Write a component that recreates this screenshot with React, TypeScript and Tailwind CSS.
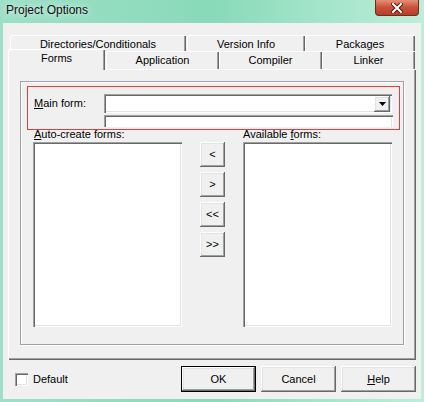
import React from "react";

// classic 3D edges
const raised =
  "bg-[#f0f0f0] shadow-[inset_-1px_-1px_0_#696969,inset_1px_1px_0_#ffffff,inset_-2px_-2px_0_#a0a0a0,inset_2px_2px_0_#e3e3e3]";
const sunken =
  "bg-white shadow-[inset_1px_1px_0_#a0a0a0,inset_2px_2px_0_#696969,inset_-1px_-1px_0_#ffffff,inset_-2px_-2px_0_#e3e3e3]";
const tab =
  "bg-[#f0f0f0] rounded-tl-[2px] text-center leading-[18px] shadow-[inset_1px_1px_0_#ffffff,inset_-1px_0_0_#696969,inset_-2px_0_0_#a0a0a0]";

const Tab = ({ label, w, selected }: { label: string; w: string; selected?: boolean }) => (
  <div
    className={`${tab} ${w} ${selected ? "h-[21px] relative z-10" : "h-[18px] mt-[2px]"}`}
  >
    {label}
  </div>
);

const Btn = ({ children, w, isDefault }: { children: React.ReactNode; w: string; isDefault?: boolean }) => (
  <div
    className={`${w} h-[26px] flex items-center justify-center ${
      isDefault ? "border border-black" : ""
    }`}
  >
    <div className={`${raised} w-full h-full flex items-center justify-center`}>{children}</div>
  </div>
);

const Arrow = ({ label }: { label: string }) => (
  <div className={`${raised} w-[25px] h-[25px] flex items-center justify-center`}>{label}</div>
);

export default function App() {
  return (
    <div
      className="w-[424px] h-[402px] flex flex-col bg-linear-to-r from-[#9fdfc8] via-[#88dab9] to-[#bdeedb] text-[11px] text-black"
      style={{ fontFamily: '"Liberation Sans", Arial, sans-serif' }}
    >
      {/* title bar */}
      <div className="h-[23px] flex items-start justify-between">
        <div className="pl-[6px] pt-[2px] text-[12px] leading-[16px] text-[#111] [text-shadow:0_0_6px_#ffffff]">
          Project Options
        </div>
        <div className="mr-[5px] w-[44px] h-[16px] rounded-b-[4px] border border-t-0 border-[#6e2c20] bg-linear-to-b from-[#e58f75] via-[#c9503a] to-[#b63e28] flex items-center justify-center">
          <svg width="12" height="10" viewBox="0 0 12 10">
            <path d="M2 1 L10 9 M10 1 L2 9" stroke="#4a1a12" strokeWidth="4" strokeLinecap="square" />
            <path d="M2 1 L10 9 M10 1 L2 9" stroke="#ffffff" strokeWidth="2" strokeLinecap="square" />
          </svg>
        </div>
      </div>

      {/* client area */}
      <div className="mx-[3px] mb-[3px] flex-1 bg-[#f0f0f0] flex flex-col">
        {/* back row of tabs */}
        <div className="mt-[10px] ml-[7px] flex">
          <Tab label="Directories/Conditionals" w="w-[176px]" />
          <div className="w-[1px]" />
          <Tab label="Version Info" w="w-[118px]" />
          <Tab label="Packages" w="w-[110px]" />
        </div>
        {/* front row */}
        <div className="-mt-[4px] ml-[5px] h-[20px] flex items-start">
          <Tab label="Forms" w="w-[97px]" selected />
          <div className="w-[1px]" />
          <Tab label="Application" w="w-[113px]" />
          <Tab label="Compiler" w="w-[103px]" />
          <Tab label="Linker" w="w-[93px]" />
        </div>

        {/* page */}
        <div className="ml-[5px] w-[408px] h-[291px] p-[12px] shadow-[inset_1px_1px_0_#ffffff,inset_-1px_-1px_0_#696969,inset_-2px_-2px_0_#a0a0a0]">
          <div className="w-[384px] h-[264px] border border-[#a0a0a0] shadow-[inset_1px_1px_0_#ffffff,1px_1px_0_#ffffff] flex flex-col">
            {/* main form */}
            <div className="ml-[6px] mt-[4px] w-[373px] h-[44px] border border-[#e8393d] flex flex-col">
              <div className="mt-[7px] flex items-center">
                <div className="w-[76px] pl-[6px]">
                  <span className="underline">M</span>ain form:
                </div>
                <div className={`${sunken} w-[288px] h-[19px] flex justify-end items-start pt-[2px] pr-[2px]`}>
                  <div className={`${raised} w-[16px] h-[16px] flex items-center justify-center`}>
                    <svg width="7" height="4" viewBox="0 0 7 4">
                      <path d="M0 0 H7 L3.5 4 Z" fill="#000" />
                    </svg>
                  </div>
                </div>
              </div>
              <div className="ml-[76px] mt-[2px] w-[289px] h-[12px] bg-white shadow-[inset_1px_1px_0_#a0a0a0,inset_2px_2px_0_#696969,inset_-1px_0_0_#ffffff,inset_-2px_0_0_#e3e3e3]" />
            </div>

            {/* list labels */}
            <div className="-mt-[2px] ml-[12px] h-[14px] leading-[12px] flex">
              <div className="w-[210px] pl-[1px]">
                <span className="underline">A</span>uto-create forms:
              </div>
              <div>
                Available <span className="underline">f</span>orms:
              </div>
            </div>

            {/* lists */}
            <div className="ml-[12px] flex items-start">
              <div className={`${sunken} w-[149px] h-[185px]`} />
              <div className="ml-[18px] flex flex-col gap-[5px]">
                <Arrow label="<" />
                <Arrow label=">" />
                <Arrow label="<<" />
                <Arrow label=">>" />
              </div>
              <div className={`${sunken} ml-[18px] w-[149px] h-[185px]`} />
            </div>
          </div>
        </div>

        {/* bottom row */}
        <div className="mt-[6px] flex items-center">
          <div className={`${sunken} ml-[12px] w-[13px] h-[13px]`} />
          <div className="ml-[5px]">Default</div>
          <div className="ml-auto mr-[5px] flex gap-[5px]">
            <Btn w="w-[75px]" isDefault>
              OK
            </Btn>
            <Btn w="w-[75px]">Cancel</Btn>
            <Btn w="w-[75px]">
              <span className="underline">H</span>elp
            </Btn>
          </div>
        </div>
      </div>
    </div>
  );
}
